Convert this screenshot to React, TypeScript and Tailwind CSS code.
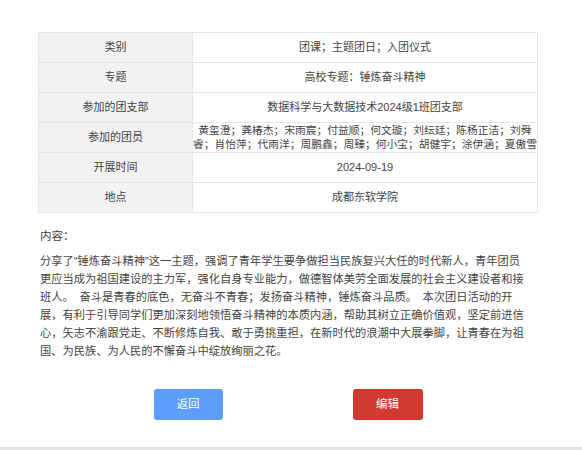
const rows: { label: string; value: string; multi?: boolean }[] = [
  { label: '类别', value: '团课；主题团日；入团仪式' },
  { label: '专题', value: '高校专题：锤炼奋斗精神' },
  { label: '参加的团支部', value: '数据科学与大数据技术2024级1班团支部' },
  {
    label: '参加的团员',
    value:
      '黄玺澄；龚椿杰；宋雨宸；付益顺；何文璇；刘纭廷；陈杨正洁；刘舜睿；肖怡萍；代雨洋；周鹏鑫；周臻；何小宝；胡健宇；涂伊涵；夏傲雪',
    multi: true,
  },
  { label: '开展时间', value: '2024-09-19' },
  { label: '地点', value: '成都东软学院' },
];

const content =
  '分享了“锤炼奋斗精神”这一主题，强调了青年学生要争做担当民族复兴大任的时代新人，青年团员更应当成为祖国建设的主力军，强化自身专业能力，做德智体美劳全面发展的社会主义建设者和接班人。\u3000奋斗是青春的底色，无奋斗不青春；发扬奋斗精神，锤炼奋斗品质。\u3000本次团日活动的开展，有利于引导同学们更加深刻地领悟奋斗精神的本质内涵，帮助其树立正确价值观，坚定前进信心，矢志不渝跟党走、不断修炼自我、敢于勇挑重担，在新时代的浪潮中大展拳脚，让青春在为祖国、为民族、为人民的不懈奋斗中绽放绚丽之花。';

export default function App() {
  return (
    <div
      className="w-[582px] h-[450px] bg-white flex flex-col text-[#333]"
      style={{ fontFamily: '"Liberation Sans", "Noto Sans CJK SC", sans-serif' }}
    >
      <div className="flex-1 pt-[32px] pl-[38px] pr-[44px]">
        {/* 详情表格 */}
        <div className="border border-[#e6e6e6] border-b-0">
          {rows.map((row) => (
            <div key={row.label} className="flex h-[30px] border-b border-[#e6e6e6]">
              <div className="w-[154px] shrink-0 bg-[#f2f2f2] border-r border-[#e6e6e6] flex items-center justify-center text-[11px] text-[#444]">
                {row.label}
              </div>
              <div
                className={
                  row.multi
                    ? 'flex-1 flex items-center justify-center text-center text-[10.75px] leading-[13.5px] text-[#444]'
                    : 'flex-1 flex items-center justify-center text-[11px] text-[#444]'
                }
              >
                {row.value}
              </div>
            </div>
          ))}
        </div>

        {/* 内容 */}
        <div className="mt-[15px] pl-[2px] text-[11.5px] text-[#444]">内容：</div>
        <p className="mt-[7px] pl-[2px] w-[492px] text-[11.25px] leading-[18px] text-[#444]">{content}</p>

        {/* 按钮 */}
        <div className="mt-[29px] flex justify-center gap-[130px]">
          <button className="w-[69px] h-[31px] rounded-[3px] bg-[#5c9ffa] text-white text-[11.5px]">
            返回
          </button>
          <button className="w-[70px] h-[31px] rounded-[3px] bg-[#d13a2f] text-white text-[11.5px]">
            编辑
          </button>
        </div>
      </div>
      <div className="h-[3px] bg-[#e5e5e5]" />
    </div>
  );
}
